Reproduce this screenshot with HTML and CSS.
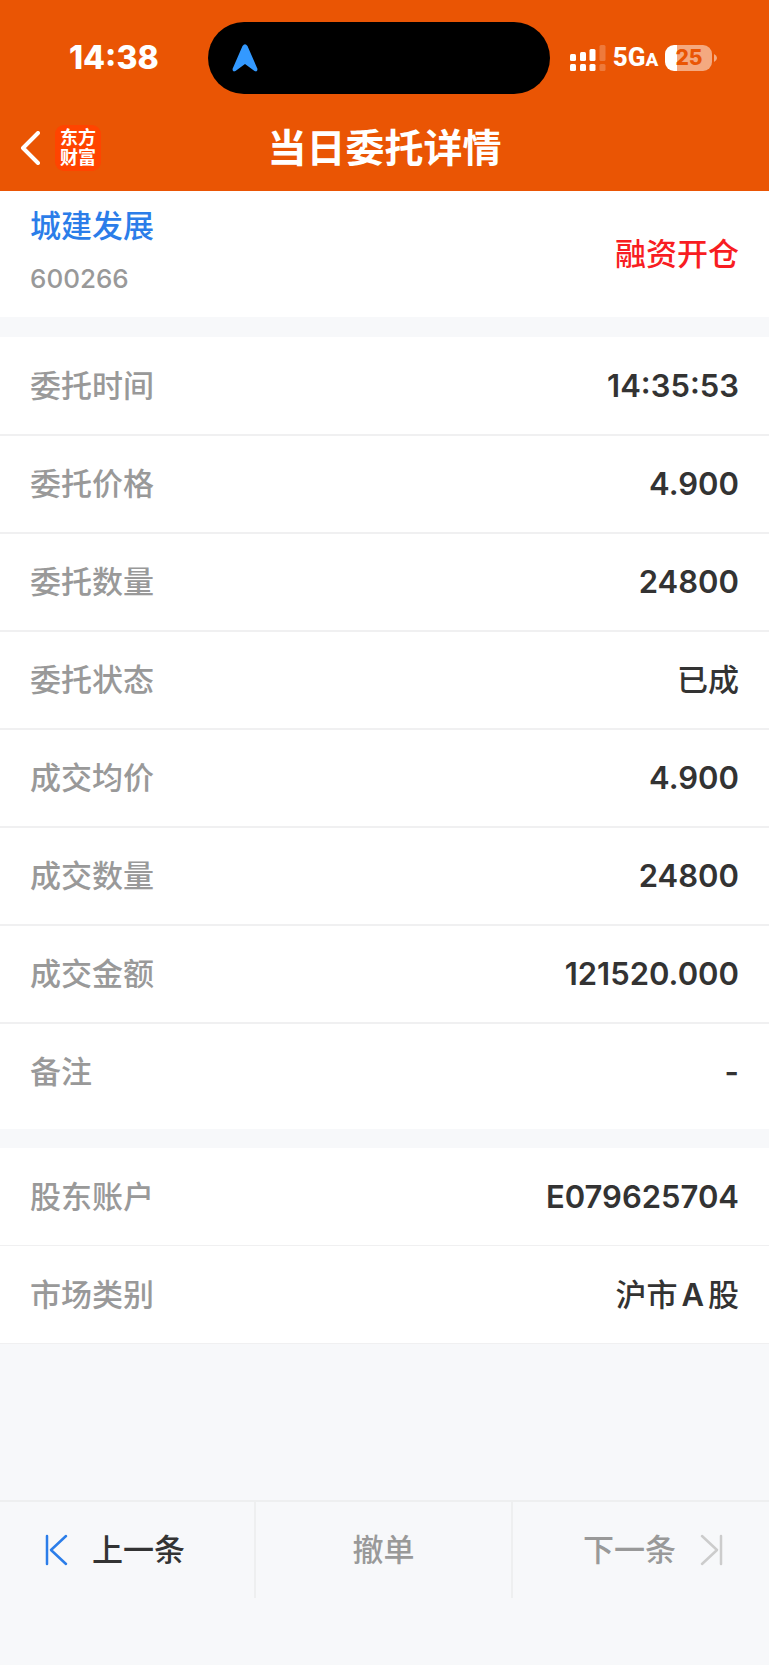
FILE: index.html
```html
<!DOCTYPE html>
<html lang="zh-CN">
<head>
<meta charset="utf-8">
<meta name="viewport" content="width=device-width, initial-scale=1">
<title>当日委托详情</title>
<link rel="stylesheet" href="styles.css">
</head>
<body>
<div class="page">
  <header class="header">
    <div class="status">
      <span class="clock">14:38</span>
      <div class="island">
        <svg width="26" height="28" viewBox="0 0 26 28" aria-hidden="true"><path d="M10.500 2Q13-1.500 15.500 2L25.500 25Q25.500 28.500 22.500 27L13 20 3.500 27Q.5 28.500.5 25Z" fill="#3399ff"/></svg>
      </div>
      <div class="indicators">
        <svg width="36" height="26" viewBox="0 0 36 26" fill="#fff" aria-hidden="true">
          <rect x="0" y="9" width="6" height="7" rx="1.500"/><rect x="0" y="19" width="6" height="7" rx="1.500"/>
          <rect x="10" y="7" width="6" height="9" rx="1.500"/><rect x="10" y="19" width="6" height="7" rx="1.500"/>
          <rect x="19.500" y="4" width="6" height="12" rx="1.500"/><rect x="19.500" y="19" width="6" height="7" rx="1.500"/>
          <g opacity=".22"><rect x="29.500" y="0" width="6" height="16" rx="1.500"/><rect x="29.500" y="19" width="6" height="7" rx="1.500"/></g>
        </svg>
        <span class="network">5G<span class="network-suffix">A</span></span>
        <span class="battery"><span class="battery-body">25</span><svg width="3" height="8" viewBox="0 0 3 8" aria-hidden="true"><path d="M0 0Q3 1.500 3 4T0 8Z" fill="#fff" opacity=".5"/></svg></span>
      </div>
    </div>
    <div class="nav">
      <div class="nav-left">
        <button class="back" type="button" aria-label="返回">
          <svg width="20" height="34" viewBox="0 0 20 34" aria-hidden="true"><path d="M18 2 3 17l15 15" fill="none" stroke="#fff" stroke-width="4" stroke-linecap="round" stroke-linejoin="round"/></svg>
        </button>
        <span class="logo"><span>东方</span><span>财富</span></span>
      </div>
      <h1 class="title">当日委托详情</h1>
    </div>
  </header>

  <main class="content">
    <section class="stock">
      <div class="stock-info">
        <a class="stock-name" href="#">城建发展</a>
        <span class="stock-code">600266</span>
      </div>
      <span class="side">融资开仓</span>
    </section>

    <dl class="list order">
      <div class="row"><dt>委托时间</dt><dd class="number">14:35:53</dd></div>
      <div class="row"><dt>委托价格</dt><dd class="number">4.900</dd></div>
      <div class="row"><dt>委托数量</dt><dd class="number">24800</dd></div>
      <div class="row"><dt>委托状态</dt><dd>已成</dd></div>
      <div class="row"><dt>成交均价</dt><dd class="number">4.900</dd></div>
      <div class="row"><dt>成交数量</dt><dd class="number">24800</dd></div>
      <div class="row"><dt>成交金额</dt><dd class="number">121520.000</dd></div>
      <div class="row"><dt>备注</dt><dd class="number">-</dd></div>
    </dl>

    <dl class="list account">
      <div class="row"><dt>股东账户</dt><dd class="number">E079625704</dd></div>
      <div class="row"><dt>市场类别</dt><dd>沪市<span class="latin number">A</span>股</dd></div>
    </dl>
  </main>

  <footer class="footer">
    <button class="action prev" type="button">
      <svg width="24" height="32" viewBox="0 0 24 32" aria-hidden="true"><path d="M3 2v28M22 2 7 16l15 14" fill="none" stroke="#2b7de9" stroke-width="2.500" stroke-linecap="round" stroke-linejoin="round"/></svg>
      上一条
    </button>
    <button class="action" type="button" disabled>撤单</button>
    <button class="action next" type="button" disabled>
      下一条
      <svg width="24" height="32" viewBox="0 0 24 32" aria-hidden="true"><path d="M21 2v28M2 2l15 14L2 30" fill="none" stroke="#ccc" stroke-width="2.500" stroke-linecap="round" stroke-linejoin="round"/></svg>
    </button>
  </footer>
</div>
</body>
</html>
```
FILE: styles.css
```css
* {
  box-sizing: border-box;
}

body {
  margin: 0;
  background: #f7f8fa;
  color: #333;
  font-family: Inter, "Noto Sans CJK SC", sans-serif;
  font-size: 31px;
  font-weight: 500;
  line-height: 40px;
}

svg {
  display: block;
  flex: none;
}

button {
  border: 0;
  padding: 0;
  background: none;
  color: inherit;
  font: inherit;
}

.page {
  display: flex;
  flex-direction: column;
  min-height: 100vh;
}

.header {
  padding-top: 22px;
  background: #ea5504;
  color: #fff;
}

.status {
  display: grid;
  grid-template-columns: 27% 1fr 28.5%;
  align-items: center;
}

.clock {
  padding-left: 20px;
  text-align: center;
  font-size: 32px;
  font-weight: 800;
}

.island {
  display: flex;
  align-items: center;
  height: 72px;
  padding: 0 24px;
  border-radius: 36px;
  background: #000;
}

.indicators {
  display: flex;
  align-items: center;
  gap: 7px;
  padding-left: 20px;
}

.network {
  font-family: Roboto, sans-serif;
  font-size: 26px;
  font-weight: 800;
}

.network-suffix {
  font-size: 19px;
}

.battery {
  display: flex;
  align-items: center;
  gap: 2px;
}

.battery-body {
  width: 47px;
  height: 26px;
  border-radius: 9px;
  background: linear-gradient(to right, #fff 12px, #f4a980 12px);
  color: #ea5504;
  font-size: 21px;
  font-weight: 800;
  line-height: 26px;
  text-align: center;
}

.nav {
  display: grid;
  grid-template-columns: 1fr auto 1fr;
  align-items: center;
  height: 97px;
  padding: 10px 20px 0;
}

.nav-left {
  display: flex;
  align-items: center;
  gap: 15px;
}

.logo {
  display: flex;
  flex-direction: column;
  align-items: center;
  justify-content: center;
  width: 46px;
  height: 46px;
  border-radius: 9px;
  background: #ff4400;
  font-size: 18px;
  font-weight: 700;
  line-height: 20px;
}

.title {
  margin: 0;
  font-size: 39px;
  font-weight: 700;
  line-height: 48px;
}

.content {
  flex: 1;
}

.stock {
  display: flex;
  align-items: center;
  justify-content: space-between;
  padding: 0 30px;
  background: #fff;
}

.stock-info {
  display: flex;
  flex-direction: column;
  gap: 16px;
  padding: 15px 0 21px;
}

.stock-name {
  color: #2b7de9;
  text-decoration: none;
}

.stock-code {
  color: #999;
  font-size: 26px;
  line-height: 34px;
}

.side {
  color: #f81d22;
}

.list {
  margin: 0;
  background: #fff;
}

.order {
  margin-top: 20px;
  padding: 1px 0 7px;
}

.account {
  margin-top: 19px;
}

.row {
  display: flex;
  align-items: center;
  justify-content: space-between;
  height: 98px;
  padding: 0 30px;
  border-bottom: 2px solid #f0f0f1;
}

.order .row:last-child {
  border-bottom-color: transparent;
}

.account .row {
  border-bottom-width: 1px;
}

dt {
  color: #999;
}

dd {
  margin: 0;
}

.number {
  font-weight: 600;
}

.latin {
  margin: 0 4px;
}

.footer {
  display: grid;
  grid-template-columns: repeat(3, 1fr);
  padding-bottom: 67px;
  border-top: 2px solid #eeeff0;
}

.action {
  display: flex;
  align-items: center;
  justify-content: center;
  gap: 24px;
  height: 96px;
  border-right: 2px solid #eeeff0;
}

.action:disabled {
  color: #999;
}

.prev {
  justify-content: flex-start;
  padding-left: 44px;
}

.next {
  justify-content: flex-end;
  padding-right: 45px;
  border-right: 0;
}
```
